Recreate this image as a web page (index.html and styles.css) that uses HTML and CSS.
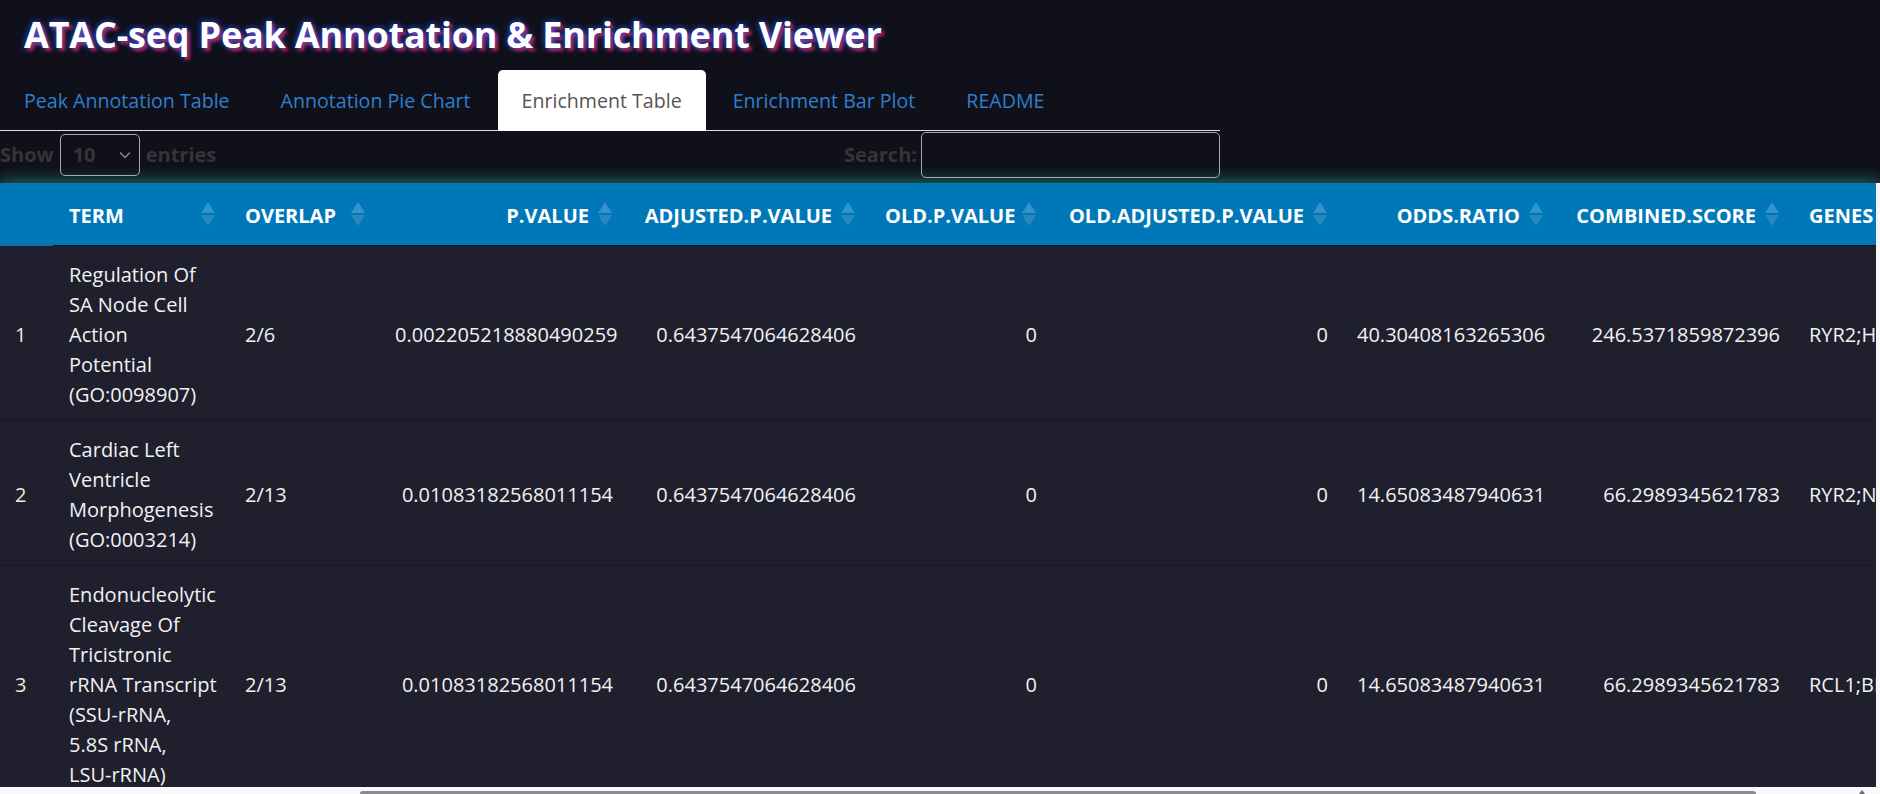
FILE: index.html
```html
<!DOCTYPE html>
<html lang="en">
<head>
<meta charset="utf-8">
<title>ATAC-seq Peak Annotation &amp; Enrichment Viewer</title>
<link rel="stylesheet" href="styles.css">
</head>
<body>
<header class="app-header">
  <h1 class="app-title">ATAC-seq Peak Annotation &amp; Enrichment Viewer</h1>
</header>
<nav class="tabs">
  <a class="tab">Peak Annotation Table</a>
  <a class="tab">Annotation Pie Chart</a>
  <a class="tab active">Enrichment Table</a>
  <a class="tab">Enrichment Bar Plot</a>
  <a class="tab">README</a>
</nav>
<section class="panel">
  <div class="toolbar">
    <div class="length">
      <span>Show</span>
      <span class="select"><span class="select-value">10</span>
        <svg class="chev" width="12" height="8" viewBox="0 0 12 8"><path d="M1 1.5 L6 6.5 L11 1.5" fill="none" stroke="#8a8a8a" stroke-width="1.4"/></svg>
      </span>
      <span>entries</span>
    </div>
    <div class="search">
      <span>Search:</span>
      <span class="search-input"></span>
    </div>
  </div>
  <div class="table-scroll">
    <table class="grid">
      <colgroup>
        <col class="c-idx"><col class="c-term"><col class="c-overlap"><col class="c-p"><col class="c-adj">
        <col class="c-oldp"><col class="c-oldadj"><col class="c-odds"><col class="c-comb"><col class="c-genes">
      </colgroup>
      <thead>
        <tr>
          <th class="idx"></th>
          <th class="sort">TERM<svg class="sorticon" width="14" height="24" viewBox="0 0 14 24"><path class="up" d="M7 0 L14 11 L0 11 Z"/><path class="down" d="M0 13 L14 13 L7 24 Z"/></svg></th>
          <th class="sort">OVERLAP<svg class="sorticon" width="14" height="24" viewBox="0 0 14 24"><path class="up" d="M7 0 L14 11 L0 11 Z"/><path class="down" d="M0 13 L14 13 L7 24 Z"/></svg></th>
          <th class="sort num">P.VALUE<svg class="sorticon" width="14" height="24" viewBox="0 0 14 24"><path class="up" d="M7 0 L14 11 L0 11 Z"/><path class="down" d="M0 13 L14 13 L7 24 Z"/></svg></th>
          <th class="sort num">ADJUSTED.P.VALUE<svg class="sorticon" width="14" height="24" viewBox="0 0 14 24"><path class="up" d="M7 0 L14 11 L0 11 Z"/><path class="down" d="M0 13 L14 13 L7 24 Z"/></svg></th>
          <th class="sort num">OLD.P.VALUE<svg class="sorticon" width="14" height="24" viewBox="0 0 14 24"><path class="up" d="M7 0 L14 11 L0 11 Z"/><path class="down" d="M0 13 L14 13 L7 24 Z"/></svg></th>
          <th class="sort num">OLD.ADJUSTED.P.VALUE<svg class="sorticon" width="14" height="24" viewBox="0 0 14 24"><path class="up" d="M7 0 L14 11 L0 11 Z"/><path class="down" d="M0 13 L14 13 L7 24 Z"/></svg></th>
          <th class="sort num">ODDS.RATIO<svg class="sorticon" width="14" height="24" viewBox="0 0 14 24"><path class="up" d="M7 0 L14 11 L0 11 Z"/><path class="down" d="M0 13 L14 13 L7 24 Z"/></svg></th>
          <th class="sort num">COMBINED.SCORE<svg class="sorticon" width="14" height="24" viewBox="0 0 14 24"><path class="up" d="M7 0 L14 11 L0 11 Z"/><path class="down" d="M0 13 L14 13 L7 24 Z"/></svg></th>
          <th class="sort">GENES<svg class="sorticon" width="14" height="24" viewBox="0 0 14 24"><path class="up" d="M7 0 L14 11 L0 11 Z"/><path class="down" d="M0 13 L14 13 L7 24 Z"/></svg></th>
        </tr>
      </thead>
      <tbody>
        <tr>
          <td class="idx">1</td>
          <td>Regulation Of<br>SA Node Cell<br>Action<br>Potential<br>(GO:0098907)</td>
          <td>2/6</td>
          <td class="num">0.002205218880490259</td>
          <td class="num">0.6437547064628406</td>
          <td class="num">0</td>
          <td class="num">0</td>
          <td class="num">40.30408163265306</td>
          <td class="num">246.5371859872396</td>
          <td>RYR2;HCN4</td>
        </tr>
        <tr>
          <td class="idx">2</td>
          <td>Cardiac Left<br>Ventricle<br>Morphogenesis<br>(GO:0003214)</td>
          <td>2/13</td>
          <td class="num">0.01083182568011154</td>
          <td class="num">0.6437547064628406</td>
          <td class="num">0</td>
          <td class="num">0</td>
          <td class="num">14.65083487940631</td>
          <td class="num">66.2989345621783</td>
          <td>RYR2;NKX2-5</td>
        </tr>
        <tr>
          <td class="idx">3</td>
          <td>Endonucleolytic<br>Cleavage Of<br>Tricistronic<br>rRNA Transcript<br>(SSU-rRNA,<br>5.8S rRNA,<br>LSU-rRNA)</td>
          <td>2/13</td>
          <td class="num">0.01083182568011154</td>
          <td class="num">0.6437547064628406</td>
          <td class="num">0</td>
          <td class="num">0</td>
          <td class="num">14.65083487940631</td>
          <td class="num">66.2989345621783</td>
          <td>RCL1;BMS1</td>
        </tr>
      </tbody>
    </table>
  </div>
</section>
<div class="hscroll"><div class="hscroll-thumb"></div><div class="hscroll-arrow"></div></div>
</body>
</html>
```

FILE: styles.css
```css
html, body {
  margin: 0;
  padding: 0;
  overflow: hidden;
}
body {
  background: #10101b;
  font-family: "Open Sans", "Noto Sans", "DejaVu Sans", sans-serif;
  font-size: 20px;
  line-height: 30px;
  color: #f2f2f2;
}
.app-header {
  height: 70px;
  display: flex;
  align-items: center;
  padding: 0 24px;
}
.app-title {
  margin: 0;
  font-size: 36px;
  line-height: 46px;
  font-weight: 700;
  color: #ffffff;
  letter-spacing: -0.2px;
  text-shadow: 0 0 6px #2458ff, 3px 3px 3px #c01a32;
}
.tabs {
  display: flex;
  width: 1220px;
  height: 60px;
  border-bottom: 1px solid #dddddd;
  gap: 3px;
  font-size: 19.6px;
}
.tab {
  padding: 16px 24px 14px;
  color: #2f7fcc;
  border-radius: 5px 5px 0 0;
}
.tab.active {
  background: #ffffff;
  color: #555555;
  height: 31px;
}
.toolbar {
  width: 1220px;
  height: 47px;
  display: flex;
  align-items: center;
  justify-content: space-between;
  color: #353535;
  font-weight: 700;
}
.length, .search {
  display: flex;
  align-items: center;
  gap: 6px;
}
.select {
  width: 80px;
  height: 42px;
  border: 1px solid #a9a9a9;
  border-radius: 5px;
  display: flex;
  align-items: center;
  justify-content: space-between;
  padding: 0 6px 0 12px;
  box-sizing: border-box;
}
.chev { margin-right: 2px; }
.search { gap: 4px; }
.search-input {
  width: 297px;
  height: 44px;
  border: 1px solid #a9a9a9;
  border-radius: 5px;
}
.table-scroll {
  margin-top: 5px;
  width: 1876px;
  overflow: hidden;
  border-right: 4px solid #f7f7f7;
  box-shadow: 0 -4px 14px rgba(40, 190, 170, 0.45);
}
.grid {
  table-layout: fixed;
  width: 2093px;
  border-collapse: collapse;
  border-spacing: 0;
}
.c-idx { width: 53px; }
.c-term { width: 176px; }
.c-overlap { width: 150px; }
.c-p { width: 247px; }
.c-adj { width: 243px; }
.c-oldp { width: 181px; }
.c-oldadj { width: 291px; }
.c-odds { width: 216px; }
.c-comb { width: 236px; }
.c-genes { width: 300px; }
.grid thead tr {
  background: #0077b6;
}
.grid th {
  position: relative;
  padding: 18px 13px 14px 16px;
  text-align: left;
  font-weight: 700;
  color: #ffffff;
  white-space: nowrap;
  border-bottom: 1px solid #14141e;
}
.grid th.idx { border-bottom-color: #0d6e8c; }
.grid th.sort { padding-right: 37px; }
.grid th.num { text-align: right; }
.sorticon {
  position: absolute;
  right: 14px;
  top: 19px;
}
.sorticon .up { fill: #3592ca; }
.sorticon .down { fill: #2787c1; }
.grid td {
  padding: 14px 13px 10px 16px;
  background: #1f1f2d;
  border-top: 1px solid #171723;
  vertical-align: middle;
  white-space: nowrap;
}
.grid tbody tr:first-child td { border-top: none; }
.grid td.idx { color: #f1ead2; padding-left: 15px; }
.grid td.num { text-align: right; }
.hscroll {
  position: fixed;
  left: 0;
  right: 0;
  bottom: 0;
  height: 7px;
  background: #f9f9f9;
}
.hscroll-thumb {
  position: absolute;
  left: 360px;
  width: 1396px;
  top: 4px;
  height: 6px;
  border-radius: 3px;
  background: #8b8b8b;
}
.hscroll-arrow {
  position: absolute;
  right: 15px;
  top: 3px;
  width: 0;
  height: 0;
  border-left: 3px solid transparent;
  border-right: 3px solid transparent;
  border-bottom: 4px solid #6a6a6a;
}
```
